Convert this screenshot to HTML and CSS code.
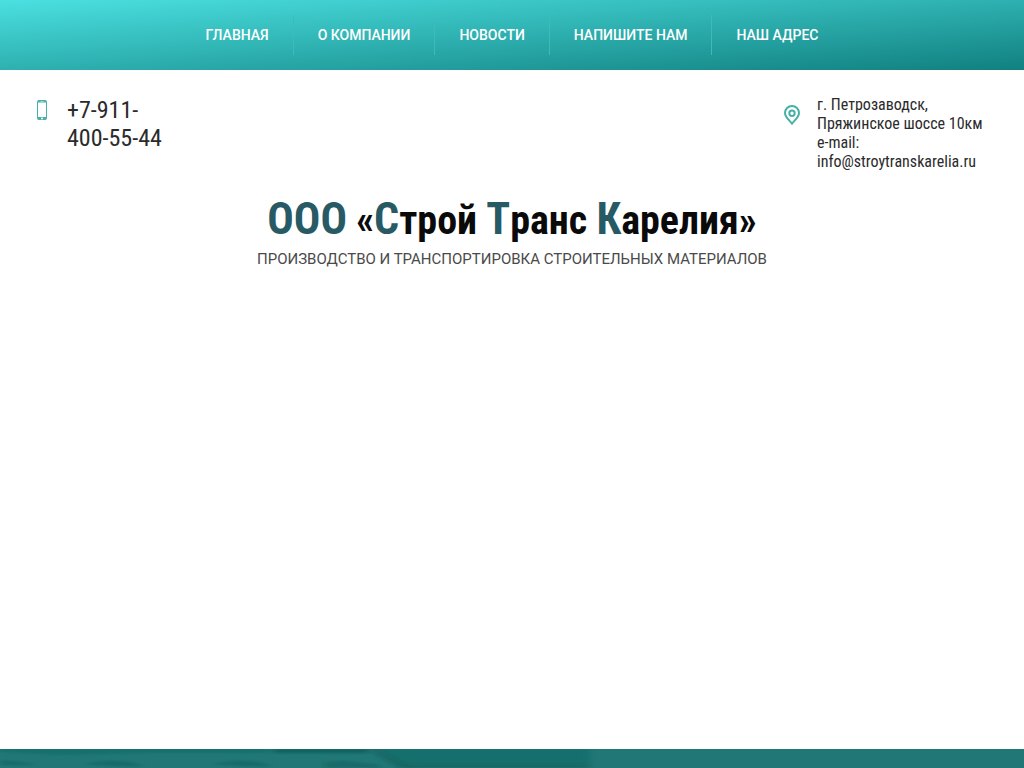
FILE: index.html
```html
<!DOCTYPE html>
<html lang="ru">
<head>
<meta charset="utf-8">
<meta name="viewport" content="width=device-width, initial-scale=1">
<title>ООО «Строй Транс Карелия»</title>
<link rel="stylesheet" href="styles.css">
</head>
<body>
<nav class="topnav">
  <ul class="menu">
    <li class="menu-item"><a href="#">ГЛАВНАЯ</a></li>
    <li class="menu-item"><a href="#">О КОМПАНИИ</a></li>
    <li class="menu-item"><a href="#">НОВОСТИ</a></li>
    <li class="menu-item"><a href="#">НАПИШИТЕ НАМ</a></li>
    <li class="menu-item"><a href="#">НАШ АДРЕС</a></li>
  </ul>
</nav>
<header class="header">
  <div class="phone">
    <svg class="phone-icon" width="10" height="20" viewBox="0 0 10 20" aria-hidden="true"><path fill="#4aafa8" fill-rule="evenodd" d="M2 0h6a2 2 0 0 1 2 2v16a2 2 0 0 1-2 2H2a2 2 0 0 1-2-2V2a2 2 0 0 1 2-2zM1 2.500v14.500h8V2.500zM3.500 1v.6h3V1zM5 17.500a1 1 0 1 0 0 2 1 1 0 0 0 0-2z"/></svg>
    <a class="phone-number" href="tel:+79114005544">+7-911-<br>400-55-44</a>
  </div>
  <div class="brand">
    <h1 class="logo"><span class="cap">ООО</span> «<span class="cap">С</span>трой <span class="cap">Т</span>ранс <span class="cap">К</span>арелия»</h1>
    <p class="slogan">ПРОИЗВОДСТВО И ТРАНСПОРТИРОВКА СТРОИТЕЛЬНЫХ МАТЕРИАЛОВ</p>
  </div>
  <div class="address">
    <svg class="pin-icon" width="16" height="20" viewBox="0 0 16 20" fill="none" stroke="#46b0a6" stroke-width="2" aria-hidden="true"><path d="M8 18.600C6.500 16.400 1 12.500 1 8a7 7 0 0 1 14 0c0 4.500-5.500 8.400-7 10.600z"/><circle cx="8" cy="8.300" r="2.700"/></svg>
    <address class="address-text">г. Петрозаводск,<br>Пряжинское шоссе 10км<br>e-mail:<br>info@stroytranskarelia.ru</address>
  </div>
</header>
<main class="content"></main>
<section class="banner" aria-hidden="true">
  <svg class="banner-art" viewBox="0 0 1024 19" preserveAspectRatio="none">
    <defs><filter id="soft" x="-10%" y="-100%" width="120%" height="300%"><feGaussianBlur stdDeviation="3 1"/></filter></defs>
    <g filter="url(#soft)" fill="#0d625f">
      <path opacity=".35" d="M0 0h270v4H150L60 6 0 3z"/>
      <path opacity=".7" d="M0 12l20 1 16 3H10L0 15zM84 15l25-3 20 1 14 4h-20zM212 15l25-3 20 1 14 4h-20z"/>
      <path d="M274 0h94v4h-94z"/>
      <path opacity=".6" d="M368 0l12 0 18 11 24 8h-22l-16-8zM325 13l20-1 35 4v3h-55z"/>
      <path opacity=".35" d="M380 0h210v19H400z"/>
      <path opacity=".5" d="M415 15h175v4H415z"/>
    </g>
  </svg>
</section>
</body>
</html>
```
FILE: styles.css
```css
* {
  box-sizing: border-box;
}

body {
  display: flex;
  flex-direction: column;
  min-height: 100vh;
  margin: 0;
  background: #fff;
  color: #2b2b2b;
  font-family: Roboto, sans-serif;
}

a {
  color: inherit;
  text-decoration: none;
}

.topnav {
  padding: 15px 24px;
  background: linear-gradient(to bottom right, #4be0e0, #118080);
}

.menu {
  display: flex;
  justify-content: center;
  margin: 0;
  padding: 0;
  list-style: none;
}

.menu-item {
  padding: 0 24px;
  color: #fff;
  font-size: 14px;
  font-weight: 500;
  line-height: 40px;
}

.menu-item + .menu-item {
  border-left: 1px solid #3fbaba;
}

.header {
  display: grid;
  grid-template-columns: 1fr auto 1fr;
  padding: 25px 36px 0;
}

.phone {
  display: flex;
  align-items: flex-start;
  gap: 20px;
  padding-top: 1px;
}

.phone-icon {
  flex: none;
  margin: 4px 0 0 1px;
}

.phone-number {
  font-family: "Roboto Condensed", "Liberation Sans Narrow", Roboto, sans-serif;
  font-size: 24px;
  line-height: 28px;
}

.brand {
  padding-top: 96px;
  text-align: center;
}

.logo {
  margin: 0;
  color: #0a0a0a;
  font-family: "Liberation Sans Narrow", "Roboto Condensed", "Liberation Sans", sans-serif;
  font-size: 40px;
  font-weight: 700;
  line-height: 56px;
  white-space: nowrap;
}

.cap {
  color: #275a64;
  font-size: 44px;
}

.slogan {
  margin: 0;
  color: #4a4a4a;
  font-size: 15px;
  line-height: 20px;
  white-space: nowrap;
}

.address {
  display: flex;
  align-items: flex-start;
  gap: 17px;
  padding-left: 17px;
}

.pin-icon {
  flex: none;
  margin-top: 10px;
}

.address-text {
  font-family: "Roboto Condensed", "Liberation Sans Narrow", Roboto, sans-serif;
  font-size: 16px;
  font-style: normal;
  line-height: 19px;
  white-space: nowrap;
}

.content {
  flex: 1;
}

.banner {
  height: 19px;
  background: #217775;
}

.banner-art {
  display: block;
  width: 100%;
  height: 100%;
}
```
